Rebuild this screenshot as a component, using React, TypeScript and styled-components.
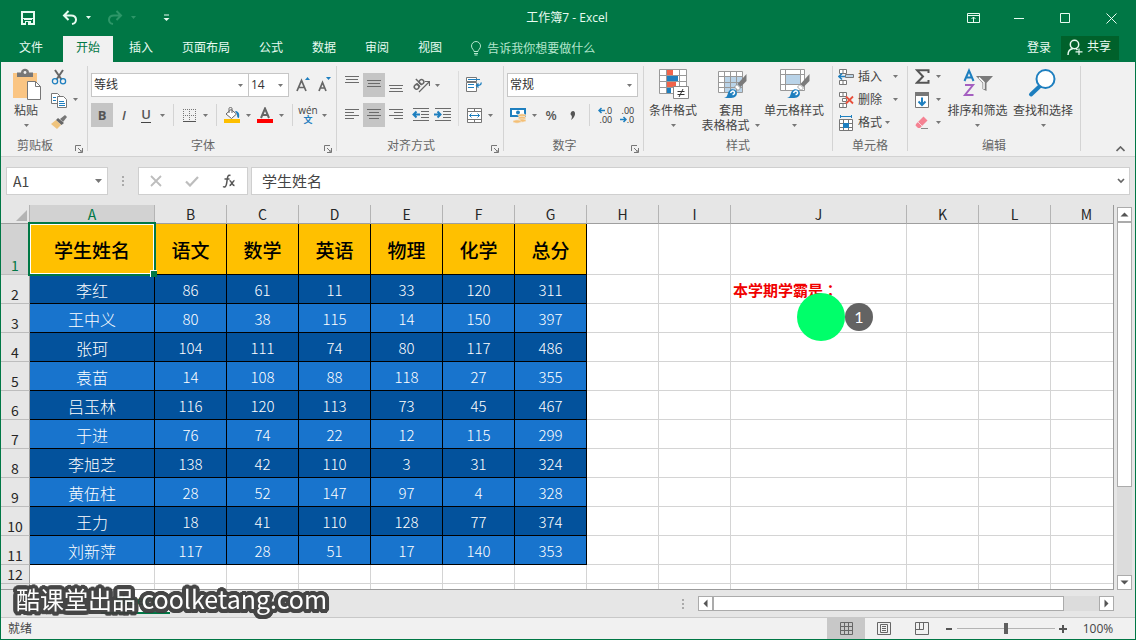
import React from "react";
import styled, { createGlobalStyle, css } from "styled-components";

const GREEN = "#007745";
const GREY = "#6b6b6b";
const BLUE = "#1e7fbf";
const UI = `"Open Sans", "Noto Sans CJK SC", sans-serif`;
const CELL = `"Noto Sans CJK SC", sans-serif`;

const Global = createGlobalStyle`
  * { box-sizing: border-box; }
  body { margin: 0; font: 12px/16px ${UI}; color: #444; }
  button, input, select { font: inherit; color: inherit; margin: 0; padding: 0; border: 0; background: none; border-radius: 0; outline: 0; }
  svg { display: block; flex: none; }
`;

const Window = styled.div`
  height: 100vh;
  min-height: 480px;
  display: flex;
  flex-direction: column;
  overflow: hidden;
  background: #e6e6e6;
`;

/* ---------- title bar and tabs ---------- */
const Header = styled.header`
  background: ${GREEN};
  color: #e8fbf1;
`;
const TitleBar = styled.div`
  display: grid;
  grid-template-columns: 1fr auto 1fr;
  align-items: center;
  height: 36px;
  padding: 0 2px 0 0;
`;
const Quick = styled.div`
  display: flex;
  align-items: center;
  gap: 16px;
  padding-left: 11px;
`;
const WindowButtons = styled.div`
  display: flex;
  justify-content: flex-end;
  align-items: center;
`;
const BarButton = styled.button<{ $w: number }>`
  display: flex;
  justify-content: center;
  align-items: center;
  width: ${(p) => p.$w}px;
  height: 32px;
`;
const Tabs = styled.nav`
  display: flex;
  height: 26px;
  padding-left: 6px;
  gap: 3px;
`;
const Tab = styled.button<{ $active?: boolean }>`
  padding: 0 13px 3px;
  white-space: nowrap;
  ${(p) => p.$active && css`
    background: #f1f1f1;
    color: ${GREEN};
    margin-left: 4px;
  `}
`;
const SignIn = styled(Tab)`
  padding: 0 7px 3px;
`;
const TellMe = styled.button`
  display: flex;
  align-items: center;
  gap: 5px;
  padding: 0 12px 1px;
  color: #b4e6cd;
`;
const Push = styled.div`
  flex: 1;
`;
const Share = styled.button`
  display: flex;
  align-items: center;
  gap: 4px;
  height: 24px;
  padding: 0 8px 2px 6px;
  margin-right: 17px;
  background: #00612b;
`;

/* ---------- ribbon ---------- */
const Body = styled.div`
  flex: 1;
  min-height: 0;
  display: flex;
  flex-direction: column;
  border: solid ${GREEN};
  border-width: 0 1px 1px;
`;
const Ribbon = styled.div`
  flex: none;
  display: flex;
  height: 95px;
  background: #f1f1f1;
  border-bottom: 1px solid #d2d2d2;
`;
const Group = styled.section<{ $w: number }>`
  width: ${(p) => p.$w}px;
  flex: none;
  display: flex;
  flex-direction: column;
  padding-top: 3px;
`;
const GroupBody = styled.div<{ $pad?: number }>`
  display: flex;
  height: 69px;
  padding-left: ${(p) => p.$pad ?? 0}px;
`;
const GroupLabel = styled.div`
  display: flex;
  align-items: center;
  height: 22px;
  padding-top: 2px;
  text-align: center;
  color: #666;
  span { flex: 1; }
`;
const LaunchButton = styled.button`
  width: 18px;
  padding: 5px 0 0 6px;
`;
const Divider = styled.div`
  flex: none;
  width: 1px;
  margin: 4px 0 5px;
  background: #d4d4d4;
`;
const Stack = styled.div<{ $top?: number; $grow?: boolean }>`
  display: flex;
  flex-direction: column;
  flex: ${(p) => (p.$grow ? 1 : "none")};
  padding-top: ${(p) => p.$top ?? 0}px;
`;
const Row = styled.div<{ $h?: number }>`
  display: flex;
  align-items: center;
  height: ${(p) => p.$h ?? 30}px;
`;
const Tool = styled.button<{ $on?: boolean }>`
  display: flex;
  align-items: center;
  justify-content: center;
  width: 22px;
  height: 24px;
  font-size: 14px;
  background: ${(p) => (p.$on ? "#c5c5c5" : "none")};
`;
const CaretTool = styled.button`
  display: flex;
  align-items: center;
  justify-content: center;
  width: 11px;
  height: 22px;
`;
const RowDivider = styled.div`
  width: 1px;
  height: 22px;
  margin: 0 4px 0 5px;
  background: #d4d4d4;
`;
const RowGap = styled.div`
  width: 3px;
`;
const TallDivider = styled.div`
  width: 1px;
  margin: 6px 4px 8px;
  background: #dcdcdc;
`;
const TextTool = styled.button`
  display: flex;
  align-items: center;
  gap: 4px;
  padding-left: 5px;
`;
const Big = styled.button<{ $w: number }>`
  width: ${(p) => p.$w}px;
  display: flex;
  flex-direction: column;
  align-items: center;
  padding-top: 3px;
  line-height: 15px;
  white-space: nowrap;
  > svg:first-child { margin-bottom: 3px; }
`;
const BigCaret = styled.span`
  display: flex;
  align-items: center;
  height: 14px;
`;
const WithCaret = styled.span`
  display: flex;
  align-items: center;
  gap: 4px;
`;
const SelectBox = styled.label<{ $w: number; $join?: boolean }>`
  position: relative;
  display: flex;
  align-items: center;
  width: ${(p) => p.$w}px;
  height: 24px;
  margin-left: ${(p) => (p.$join ? -1 : 0)}px;
  background: #fff;
  border: 1px solid #c6c6c6;
  color: #333;
  select { width: 100%; height: 100%; padding-left: 2px; appearance: none; }
  svg { position: absolute; right: 4px; pointer-events: none; }
`;
const Collapse = styled.button`
  align-self: flex-end;
  margin-left: auto;
  padding: 4px 10px;
`;

/* ---------- formula bar ---------- */
const FormulaBar = styled.div`
  flex: none;
  display: flex;
  height: 48px;
  padding: 10px 5px 10px;
`;
const Box = styled.div`
  display: flex;
  align-items: center;
  height: 28px;
  background: #fff;
  border: 1px solid #cfcfcf;
  font: 14px/20px ${CELL};
  input { min-width: 0; flex: 1; }
`;
const NameBox = styled(Box)`
  width: 102px;
  padding: 0 4px 0 6px;
`;
const FxBox = styled(Box)`
  width: 110px;
  justify-content: space-around;
  margin-right: 3px;
`;
const FormulaInput = styled(Box)`
  flex: 1;
  padding: 0 4px 0 10px;
  font-size: 15px;
`;
const Dots = styled.div`
  display: flex;
  align-items: center;
  justify-content: center;
  width: 30px;
`;

/* ---------- grid ---------- */
const SheetArea = styled.div`
  flex: 1;
  min-height: 0;
  display: flex;
`;
const GridFrame = styled.div`
  flex: 1;
  min-width: 0;
  overflow: hidden;
  background: linear-gradient(#e6e6e6 19px, #fff 19px);
  border-right: 1px solid #9a9a9a;
  border-bottom: 1px solid #9a9a9a;
`;
const Grid = styled.table`
  width: 1121px;
  table-layout: fixed;
  border-collapse: separate;
  border-spacing: 0;
  font-family: ${CELL};
  td, th { padding: 0; overflow: visible; }
`;
const ColHead = styled.th<{ $on?: boolean }>`
  height: 19px;
  font-size: 14px;
  line-height: 18px;
  font-weight: 400;
  vertical-align: bottom;
  color: ${(p) => (p.$on ? GREEN : "#262626")};
  background: ${(p) => (p.$on ? "#d2d2d2" : "#e6e6e6")};
  border-right: 1px solid #b4b4b4;
  border-bottom: 1px solid #9f9f9f;
`;
const Corner = styled(ColHead)`
  && { padding: 0 0 2px 15px; }
`;
const RowHead = styled.th<{ $on?: boolean }>`
  font-size: 14px;
  line-height: 18px;
  font-weight: 400;
  vertical-align: bottom;
  text-align: center;
  color: ${(p) => (p.$on ? GREEN : "#262626")};
  background: ${(p) => (p.$on ? "#d2d2d2" : "#e6e6e6")};
  border-right: 1px solid #9f9f9f;
  border-bottom: 1px solid #bdbdbd;
`;
const GridRow = styled.tr<{ $h: number }>`
  height: ${(p) => p.$h}px;
`;
const Cell = styled.td`
  border-right: 1px solid #d4d4d4;
  border-bottom: 1px solid #d4d4d4;
  position: relative;
`;
const TitleCell = styled(Cell)`
  && { padding-top: 2px; }
  background: #ffc000;
  border-color: #000;
  color: #000;
  font-size: 19px;
  line-height: 24px;
  font-weight: 500;
  text-align: center;
`;
const DataCell = styled(Cell)<{ $dark: boolean; $name?: boolean }>`
  && { padding-top: 2px; }
  background: ${(p) => (p.$dark ? "#03529c" : "#1874cd")};
  border-color: #000;
  color: #fff;
  font-size: ${(p) => (p.$name ? 16 : 15)}px;
  line-height: 20px;
  font-weight: 300;
  text-align: center;
`;
const NoteCell = styled(Cell)`
  && { padding: 2px 0 0 2px; }
  color: #f00000;
  font: 700 15px/20px "Noto Sans CJK TC", sans-serif;
  white-space: nowrap;
`;
const Selection = styled.div`
  position: absolute;
  inset: -2px;
  border: 2px solid ${GREEN};
  box-shadow: inset 0 0 0 1px #fff;
  z-index: 1;
  &::after {
    content: "";
    position: absolute;
    right: -3px;
    bottom: -3px;
    width: 6px;
    height: 6px;
    background: ${GREEN};
    border: solid #fff;
    border-width: 1px 0 0 1px;
  }
`;
const ClickMark = styled.div`
  position: absolute;
  left: 66px;
  top: -11px;
  width: 48px;
  height: 48px;
  border-radius: 50%;
  background: #00ff6a;
  z-index: 2;
`;
const ClickCount = styled.div`
  position: absolute;
  left: 114px;
  top: -1px;
  width: 28px;
  height: 28px;
  border-radius: 50%;
  background: #636363;
  color: #fff;
  font: 16px/28px Lato, sans-serif;
  text-align: center;
  z-index: 2;
`;
const VScroll = styled.div`
  width: 21px;
  display: flex;
  flex-direction: column;
  align-items: flex-start;
  padding: 2px 0 0 3px;
`;
const ScrollButton = styled.button`
  flex: none;
  display: flex;
  align-items: center;
  justify-content: center;
  width: 15px;
  height: 15px;
  background: #fff;
  border: 1px solid #ababab;
`;
const VTrack = styled.div`
  flex: 1;
  width: 15px;
  background: #dcdcdc;
`;
const VThumb = styled.div`
  height: 75%;
  background: #fff;
  border: 1px solid #ababab;
`;

/* ---------- bottom bars ---------- */
const SheetTabs = styled.div`
  flex: none;
  display: flex;
  align-items: center;
  height: 27px;
  padding: 0 21px 0 100px;
`;
const SheetTab = styled.button`
  align-self: flex-start;
  width: 69px;
  height: 24px;
  background: #fff;
  border-bottom: 2px solid ${GREEN};
  color: ${GREEN};
  font-weight: 700;
`;
const HScroll = styled.div`
  display: flex;
  width: 416px;
`;
const HTrack = styled.div`
  flex: 1;
  height: 15px;
  background: #dcdcdc;
`;
const HThumb = styled.div`
  width: 91%;
  height: 15px;
  background: #fff;
  border: 1px solid #ababab;
`;
const Status = styled.footer`
  flex: none;
  display: flex;
  align-items: center;
  height: 22px;
  padding-left: 7px;
  background: #f1f1f1;
  border-top: 1px solid #c8c8c8;
`;
const ViewButton = styled.button<{ $on?: boolean }>`
  display: flex;
  align-items: center;
  justify-content: center;
  width: 38px;
  height: 21px;
  background: ${(p) => (p.$on ? "#c8c8c8" : "none")};
`;
const ZoomButton = styled.button`
  display: flex;
  align-items: center;
  justify-content: center;
  width: 16px;
  height: 21px;
`;
const ZoomRange = styled.input`
  appearance: none;
  width: 98px;
  height: 12px;
  background: linear-gradient(#b4b4b4, #b4b4b4) center / 100% 1px no-repeat;
  &::-webkit-slider-thumb {
    appearance: none;
    width: 4px;
    height: 11px;
    background: #5f5f5f;
  }
`;
const ZoomValue = styled.button`
  width: 64px;
  padding-right: 10px;
  font-size: 12px;
`;
const halo = Array.from({ length: 24 }, (_, i) => {
  const a = (i * Math.PI) / 12;
  return `${Math.round(Math.cos(a) * 40) / 10}px ${Math.round(Math.sin(a) * 40) / 10}px 0 #3e3e3e`;
}).concat("2px 0 0 #3e3e3e", "-2px 0 0 #3e3e3e", "0 2px 0 #3e3e3e", "0 -2px 0 #3e3e3e").join(",");
const Watermark = styled.div`
  position: fixed;
  left: 16px;
  bottom: 26px;
  font: 24px/30px ${CELL};
  color: #fff;
  opacity: 0.95;
  white-space: nowrap;
  text-shadow: ${halo};
  pointer-events: none;
  z-index: 5;
  span { font-size: 25px; }
`;

/* ---------- icons ---------- */
const Caret = ({ c = "#777" }: { c?: string }) => (
  <svg width="7" height="7" viewBox="0 0 7 7">
    <path d="M1 2h5L3.500 5z" fill={c} />
  </svg>
);
const ScrollArrow = ({ dir }: { dir: number }) => (
  <svg width="9" height="9" viewBox="0 0 9 9">
    <path d="M.5 2.500h8L4.500 6.500z" fill="#555" transform={`rotate(${dir} 4.500 4.500)`} />
  </svg>
);
const Launcher = () => (
  <LaunchButton aria-label="更多选项">
    <svg width="8" height="8" viewBox="0 0 8 8" fill="none" stroke="#777">
      <path d="M.5 6V.5H6M3 3l3 3M7.500 3v4.500H3M7 5v2H5" />
    </svg>
  </LaunchButton>
);
const lines = (ys: number[][]) => (
  <svg width="16" height="18" viewBox="0 0 16 18" stroke={GREY} shapeRendering="crispEdges">
    {ys.map(([y, a, b]) => <path key={y} d={`M${a} ${y}.5H${b}`} />)}
  </svg>
);
const Indent = ({ right }: { right?: boolean }) => (
  <svg width="18" height="16" viewBox="0 0 18 16" fill="none">
    <path d="M1 1.500h16M9 4.500h8M9 7.500h8M9 10.500h8M1 13.500h16" stroke={GREY} shapeRendering="crispEdges" />
    <path d={right ? "M0 7.500h6M3.500 4.500l3 3-3 3" : "M8 7.500H2M4.500 4.500l-3 3 3 3"} stroke={BLUE} strokeWidth="2" />
  </svg>
);
const Brush = () => (
  <g>
    <path d="M31.500 6l-9 10 3 3L31.500 13z" fill="#7b7b7b" />
    <path d="M22 16.500l3.500 3.500-2.500 2.500-3.500-3.500z" fill="#fff" stroke="#888" strokeWidth=".8" />
    <path d="M9 30c4-1 3-4 5-7 2-2.500 6-2 7.500.5 1.500 3-1 6.500-5.500 6.500z" fill={BLUE} />
    <path d="M15.500 25c1-2.500 3.500-2.500 4-.5s-2 2-2 2" stroke="#fff" strokeWidth="1.500" fill="none" />
  </g>
);

const grades: [string, number[]][] = [
  ["李红", [86, 61, 11, 33, 120, 311]],
  ["王中义", [80, 38, 115, 14, 150, 397]],
  ["张珂", [104, 111, 74, 80, 117, 486]],
  ["袁苗", [14, 108, 88, 118, 27, 355]],
  ["吕玉林", [116, 120, 113, 73, 45, 467]],
  ["于进", [76, 74, 22, 12, 115, 299]],
  ["李旭芝", [138, 42, 110, 3, 31, 324]],
  ["黄伍柱", [28, 52, 147, 97, 4, 328]],
  ["王力", [18, 41, 110, 128, 77, 374]],
  ["刘新萍", [117, 28, 51, 17, 140, 353]],
];
const columns: [string, number][] = [
  ["A", 125], ["B", 72], ["C", 72], ["D", 72], ["E", 72], ["F", 72], ["G", 72],
  ["H", 72], ["I", 72], ["J", 176], ["K", 72], ["L", 72], ["M", 72],
];
const blanks = ["H", "I", "J", "K", "L", "M"];

const TopBar = () => (
  <Header>
    <TitleBar>
      <Quick>
        <BarButton $w={34} aria-label="保存">
          <svg width="14" height="14" viewBox="0 0 14 14" fill="none" stroke="#e8fbf1" shapeRendering="crispEdges">
            <path d="M1 1h12v12H1z" strokeWidth="2" /><path d="M2 7.500h10M3 8.500h8" /><path d="M4 10h6v4H4z" fill="#e8fbf1" stroke="none" /><path d="M5 11h2v3H5z" fill={GREEN} stroke="none" />
          </svg>
        </BarButton>
        <BarButton $w={30} aria-label="撤消">
          <svg width="30" height="16" viewBox="0 0 30 16" fill="none" stroke="#e8fbf1" strokeWidth="2">
            <path d="M7.500 1L3 5.500 7.500 10M3 5.500h7c6.500 0 6.500 7.500 1 8.500" /><path d="M25 6h5l-2.500 3z" fill="#e8fbf1" stroke="none" />
          </svg>
        </BarButton>
        <BarButton $w={30} aria-label="恢复">
          <svg width="30" height="16" viewBox="0 0 30 16" fill="none" stroke="#2d9668" strokeWidth="2">
            <path d="M9.500 1L14 5.500 9.500 10M14 5.500H7c-6.500 0-6.500 7.500-1 8.500" /><path d="M24 6h5l-2.500 3z" fill="#2d9668" stroke="none" />
          </svg>
        </BarButton>
        <BarButton $w={26} aria-label="自定义快速访问工具栏">
          <svg width="7" height="8" viewBox="0 0 7 8"><path d="M1 1h5" stroke="#e8fbf1" /><path d="M.5 4h6l-3 3z" fill="#e8fbf1" /></svg>
        </BarButton>
      </Quick>
      <span>工作簿7 - Excel</span>
      <WindowButtons>
        <BarButton $w={46} aria-label="功能区显示选项">
          <svg width="13" height="10" viewBox="0 0 13 10" fill="none" stroke="#e8fbf1"><path d="M.5.5h12v9H.5zM.5 2.500h12M6.500 9V4M4.500 6l2-2 2 2" /></svg>
        </BarButton>
        <BarButton $w={46} aria-label="最小化">
          <svg width="10" height="10" viewBox="0 0 10 10" stroke="#e8fbf1"><path d="M0 5.500h10" /></svg>
        </BarButton>
        <BarButton $w={46} aria-label="最大化">
          <svg width="10" height="10" viewBox="0 0 10 10" fill="none" stroke="#e8fbf1"><path d="M.5.5h9v9h-9z" /></svg>
        </BarButton>
        <BarButton $w={46} aria-label="关闭">
          <svg width="11" height="11" viewBox="0 0 11 11" stroke="#e8fbf1"><path d="M.5.5l10 10M10.500.5l-10 10" /></svg>
        </BarButton>
      </WindowButtons>
    </TitleBar>
    <Tabs>
      <Tab>文件</Tab>
      <Tab $active>开始</Tab>
      {["插入", "页面布局", "公式", "数据", "审阅", "视图"].map((t) => <Tab key={t}>{t}</Tab>)}
      <TellMe>
        <svg width="12" height="15" viewBox="0 0 12 15" fill="none" stroke="#b4e6cd">
          <path d="M4 10.500C4 8.500 1.500 8 1.500 5a4.500 4.500 0 0 1 9 0c0 3-2.500 3.500-2.500 5.500zM4 12.500h4M4.500 14h3" />
        </svg>
        告诉我你想要做什么
      </TellMe>
      <Push />
      <SignIn>登录</SignIn>
      <Share>
        <svg width="16" height="17" viewBox="0 0 16 17" fill="none" stroke="#e8fbf1" strokeWidth="1.500">
          <circle cx="7.500" cy="5.500" r="4.200" /><path d="M1 16c0-4 2-6 5-6.500M9 9.500l1.500 1.500" /><path d="M12 9.500v6.500M8.500 12.800h7" strokeWidth="1.200" />
        </svg>
        共享
      </Share>
    </Tabs>
  </Header>
);

const ClipboardGroup = () => (
  <Group $w={86}>
    <GroupBody $pad={3}>
      <Big $w={44}>
        <svg width="30" height="32" viewBox="0 0 30 32">
          <path d="M2 5h24v25H2z" fill="#fac583" />
          <path d="M6 4.500h4c0-5 8-5 8 0h4V9H6z" fill="#777" /><circle cx="14" cy="4.500" r="1.400" fill="#f1f1f1" />
          <path d="M16.500 13.500h8l5 5v13h-13z" fill="#fff" stroke="#777" /><path d="M24.500 13.500v5h5" fill="none" stroke="#777" />
        </svg>
        粘贴
        <BigCaret><Caret /></BigCaret>
      </Big>
      <Stack>
        <Row $h={23}>
          <Tool aria-label="剪切">
            <svg width="16" height="16" viewBox="0 0 16 16" fill="none">
              <path d="M4 1l6.500 9.500M12 1L5.500 10.500" stroke="#666" strokeWidth="2" />
              <circle cx="4" cy="12.200" r="2.600" stroke={BLUE} strokeWidth="1.300" /><circle cx="12" cy="12.200" r="2.600" stroke={BLUE} strokeWidth="1.300" />
            </svg>
          </Tool>
        </Row>
        <Row $h={23}>
          <Tool aria-label="复制">
            <svg width="16" height="16" viewBox="0 0 16 16" fill="#fff" stroke="#777">
              <path d="M.5 1.500h6l2 2v8h-8z" /><path d="M2 5.500h3M2 8.500h3" stroke={BLUE} />
              <path d="M6.500 4.500h6l3 3v8h-9z" /><path d="M8 9.500h5M8 11.500h6M8 13.500h6" stroke={BLUE} />
            </svg>
          </Tool>
          <CaretTool aria-label="复制选项"><Caret /></CaretTool>
        </Row>
        <Row $h={23}>
          <Tool aria-label="格式刷">
            <svg width="16" height="15" viewBox="0 0 16 15">
              <path d="M0 9l5-4 5 5-4 4z" fill="#efc47e" /><path d="M5 5l2-2 6 5-2.500 2z" fill="#666" /><path d="M9 4l5-4 2 2-4 5z" fill="#777" />
            </svg>
          </Tool>
        </Row>
      </Stack>
    </GroupBody>
    <GroupLabel><span>剪贴板</span><Launcher /></GroupLabel>
  </Group>
);

const Glyph = styled.span<{ $italic?: boolean; $under?: boolean; $bold?: boolean }>`
  font-size: 13px;
  line-height: 15px;
  font-weight: ${(p) => (p.$bold ? 700 : 600)};
  font-style: ${(p) => (p.$italic ? "italic" : "normal")};
  border-bottom: ${(p) => (p.$under ? "1px solid #444" : "0")};
  color: #555;
`;
const Wen = styled.span`
  display: flex;
  flex-direction: column;
  align-items: center;
  font-size: 10px;
  line-height: 9px;
  b { color: ${BLUE}; font-size: 9px; }
`;

const FontGroup = () => (
  <Group $w={248}>
    <GroupBody $pad={3}>
      <Stack $top={5}>
        <Row>
          <SelectBox $w={158}><select aria-label="字体"><option>等线</option></select><Caret /></SelectBox>
          <SelectBox $w={41} $join><select aria-label="字号"><option>14</option></select><Caret /></SelectBox>
          <RowGap />
          <Tool aria-label="增大字号">
            <svg width="16" height="18" viewBox="0 0 16 18"><path d="M2 15L6.500 4.500 11 15M3.500 11.500h6" fill="none" stroke="#666" strokeWidth="1.700" /><path d="M10 4h5L12.500 1z" fill={BLUE} /></svg>
          </Tool>
          <Tool aria-label="减小字号">
            <svg width="16" height="18" viewBox="0 0 16 18"><path d="M2 15L5.500 6.500 9 15M3 12h5" fill="none" stroke="#666" strokeWidth="1.700" /><path d="M9 1h5l-2.500 3z" fill={BLUE} /></svg>
          </Tool>
        </Row>
        <Row>
          <Tool $on aria-label="加粗"><Glyph $bold>B</Glyph></Tool>
          <Tool aria-label="倾斜"><Glyph as="i" $italic>I</Glyph></Tool>
          <Tool aria-label="下划线"><Glyph $under>U</Glyph></Tool>
          <CaretTool aria-label="下划线选项"><Caret /></CaretTool>
          <RowDivider />
          <Tool aria-label="边框">
            <svg width="13" height="13" viewBox="0 0 13 13" stroke="#777" strokeDasharray="1 1" fill="none" shapeRendering="crispEdges">
              <path d="M0 .5h13M0 6.500h13M.5 0v13M6.500 0v13M12.500 0v13" /><path d="M0 12.500h13" stroke="#555" strokeDasharray="none" />
            </svg>
          </Tool>
          <CaretTool aria-label="边框选项"><Caret /></CaretTool>
          <RowDivider />
          <Tool aria-label="填充颜色">
            <svg width="16" height="16" viewBox="0 0 16 16" fill="none">
              <path d="M2 7l5-4.500 5.500 4.500-5 4.500z" fill="#fff" stroke="#666" /><path d="M5 6V1.500c0-1.500 3-1.500 3 0V6" stroke="#666" />
              <path d="M11 4c3 0 5 2 4 7-1.500 0-2-1-2-4z" fill={BLUE} /><path d="M0 12h16v4H0z" fill="#fdbf00" />
            </svg>
          </Tool>
          <CaretTool aria-label="填充颜色选项"><Caret /></CaretTool>
          <Tool aria-label="字体颜色">
            <svg width="16" height="16" viewBox="0 0 16 16"><path d="M4 11L8 1.500 12 11M5.500 8h5" fill="none" stroke="#666" strokeWidth="2" /><path d="M0 12h16v4H0z" fill="#f00" /></svg>
          </Tool>
          <CaretTool aria-label="字体颜色选项"><Caret /></CaretTool>
          <RowDivider />
          <Tool aria-label="拼音"><Wen>wén<b>文</b></Wen></Tool>
          <CaretTool aria-label="拼音选项"><Caret /></CaretTool>
        </Row>
      </Stack>
    </GroupBody>
    <GroupLabel><span>字体</span><Launcher /></GroupLabel>
  </Group>
);

const AlignGroup = () => (
  <Group $w={166}>
    <GroupBody $pad={4}>
      <Stack $top={5}>
        <Row>
          <Tool aria-label="顶端对齐">{lines([[0, 1, 15], [3, 2, 14], [6, 1, 15]])}</Tool>
          <Tool $on aria-label="垂直居中">{lines([[4, 1, 15], [7, 2, 14], [10, 1, 15]])}</Tool>
          <Tool aria-label="底端对齐">{lines([[9, 1, 15], [12, 2, 14], [15, 1, 15]])}</Tool>
          <RowGap />
          <Tool aria-label="方向">
            <svg width="18" height="16" viewBox="0 0 18 16" fill="none" stroke="#666" strokeWidth="1.500">
              <path d="M7 15L17 5M13 4.500H17.500V9" strokeWidth="1.200" />
              <g transform="rotate(-45 6 7)"><circle cx="3" cy="8" r="2.300" /><path d="M5.500 5.500v5M8 2v8.500" /><circle cx="10" cy="8" r="2.300" /></g>
            </svg>
          </Tool>
          <CaretTool aria-label="方向选项"><Caret /></CaretTool>
        </Row>
        <Row>
          <Tool aria-label="左对齐">{lines([[3, 1, 15], [6, 1, 10], [9, 1, 15], [12, 1, 10]])}</Tool>
          <Tool $on aria-label="居中">{lines([[3, 1, 15], [6, 3, 13], [9, 1, 15], [12, 3, 13]])}</Tool>
          <Tool aria-label="右对齐">{lines([[3, 1, 15], [6, 6, 15], [9, 1, 15], [12, 6, 15]])}</Tool>
          <RowGap />
          <Tool aria-label="减少缩进量"><Indent /></Tool>
          <Tool aria-label="增加缩进量"><Indent right /></Tool>
        </Row>
      </Stack>
      <TallDivider />
      <Stack $top={5}>
        <Row>
          <Tool aria-label="自动换行">
            <svg width="16" height="16" viewBox="0 0 16 16" fill="none" stroke="#777">
              <path d="M.5.5h10v4H.5zM.5 5.500h10v9H.5z" fill="#fff" /><path d="M2 2.500h12M2 7.500h6M2 10.500h6" stroke={BLUE} /><path d="M15 5.500c.5 2-1 3-4.500 3M12.500 6.500l-2 2 2 2" stroke={BLUE} strokeWidth="1.300" />
            </svg>
          </Tool>
        </Row>
        <Row>
          <Tool aria-label="合并后居中">
            <svg width="15" height="15" viewBox="0 0 15 15" fill="#fff" stroke="#777">
              <path d="M.5.5h14v14H.5zM.5 3.500h14M.5 11.500h14M7.500.5v3M7.500 11.500v3" /><path d="M2.500 7.500h10M4.500 5.500l-2 2 2 2M10.500 5.500l2 2-2 2" stroke={BLUE} fill="none" />
            </svg>
          </Tool>
          <CaretTool aria-label="合并选项"><Caret /></CaretTool>
        </Row>
      </Stack>
    </GroupBody>
    <GroupLabel><span>对齐方式</span><Launcher /></GroupLabel>
  </Group>
);
const Decimals = styled.span`
  font-size: 9px;
  line-height: 9px;
  color: #333;
  white-space: nowrap;
  div { display: flex; align-items: center; justify-content: flex-end; }
`;
const Arrow = ({ back }: { back?: boolean }) => (
  <svg width="7" height="7" viewBox="0 0 7 7" fill="none" stroke={BLUE} strokeWidth="1.500">
    <path d={back ? "M7 3.500H1M3.500 1L1 3.500 3.500 6" : "M0 3.500h6M3.500 1L6 3.500 3.500 6"} />
  </svg>
);

const NumberGroup = () => (
  <Group $w={139}>
    <GroupBody $pad={3}>
      <Stack $top={5}>
        <Row><SelectBox $w={131}><select aria-label="数字格式"><option>常规</option></select><Caret /></SelectBox></Row>
        <Row>
          <Tool aria-label="会计数字格式">
            <svg width="17" height="17" viewBox="0 0 17 17">
              <path d="M1 2h14v7H1z" fill="#fff" stroke={BLUE} strokeWidth="2" /><circle cx="8" cy="5.500" r="2" fill={BLUE} />
              <g fill="#f4bf75" stroke="#f1f1f1" strokeWidth=".6"><ellipse cx="12" cy="8.500" rx="4" ry="1.700" /><ellipse cx="12" cy="11" rx="4" ry="1.700" /><ellipse cx="12" cy="13.500" rx="4" ry="1.700" /><ellipse cx="7" cy="14.500" rx="4" ry="1.700" /></g>
            </svg>
          </Tool>
          <CaretTool aria-label="会计格式选项"><Caret /></CaretTool>
          <Tool aria-label="百分比样式"><Glyph>%</Glyph></Tool>
          <Tool aria-label="千位分隔样式"><svg width="6" height="9" viewBox="0 0 6 9"><path d="M3 0c3 0 3 6-2 9 1.500-3 1-4 0-5S1 0 3 0z" fill="#555" /></svg></Tool>
          <RowDivider />
          <Tool aria-label="增加小数位数"><Decimals><div><Arrow back />.0</div><div>.00</div></Decimals></Tool>
          <Tool aria-label="减少小数位数"><Decimals><div>.00</div><div><Arrow />.0</div></Decimals></Tool>
        </Row>
      </Stack>
    </GroupBody>
    <GroupLabel><span>数字</span><Launcher /></GroupLabel>
  </Group>
);

const StylesGroup = () => (
  <Group $w={188}>
    <GroupBody>
      <Big $w={58}>
        <svg width="32" height="32" viewBox="0 0 32 32" fill="none">
          <path d="M2.500 1.500h27v24h-27z" fill="#fff" />
          <path d="M10 2h6v6h-6zM10 14h9v6h-9z" fill="#f0644b" /><path d="M10 8h11v6H10zM10 20h4v6h-4z" fill={BLUE} />
          <path d="M2.500 1.500h27v24h-27zM2.500 7.500h27M2.500 13.500h27M2.500 19.500h27M9.500 1.500v24M22.500 1.500v24" stroke="#999" />
          <path d="M16.500 18.500h15v12h-15z" fill="#fff" stroke="#888" /><path d="M20.500 23.500h7M20.500 26.500h7M26 21l-4 8" stroke="#333" />
        </svg>
        条件格式
        <BigCaret><Caret /></BigCaret>
      </Big>
      <Big $w={58}>
        <svg width="32" height="32" viewBox="0 0 32 32" fill="none">
          <path d="M3.500 3.500h24v21h-24z" fill="#fff" /><path d="M10 9h17v15H10z" fill="#b9d3e8" />
          <path d="M3.500 3.500h24v21h-24zM3.500 8.500h24M3.500 14.500h24M3.500 19.500h24M9.500 3.500v21M15.500 3.500v21M21.500 3.500v21" stroke="#999" />
          <Brush />
        </svg>
        套用
        <WithCaret>表格格式<Caret /></WithCaret>
      </Big>
      <Big $w={68}>
        <svg width="32" height="32" viewBox="0 0 32 32" fill="none">
          <path d="M2.500 1.500h24v21h-24z" fill="#fff" /><path d="M8 7h14v9H8z" fill="#b9d3e8" />
          <path d="M2.500 1.500h24v21h-24zM2.500 6.500h24M2.500 16.500h24M7.500 1.500v21M22.500 1.500v21" stroke="#999" />
          <Brush />
        </svg>
        单元格样式
        <BigCaret><Caret /></BigCaret>
      </Big>
    </GroupBody>
    <GroupLabel><span>样式</span></GroupLabel>
  </Group>
);

const CellsGroup = () => (
  <Group $w={74}>
    <GroupBody>
      <Stack $grow>
        <Row $h={23}>
          <TextTool>
            <svg width="16" height="16" viewBox="0 0 16 16" fill="#fff" stroke="#777">
              <path d="M1.500.5h7v4h-7zM1.500 11.500h7v4h-7zM5 .5v4M5 11.500v4" /><path d="M7.500 5.500h8v3h-8z" fill="#b9d3e8" /><path d="M7 7.500H1M4 4.500l-3 3 3 3" stroke={BLUE} strokeWidth="1.600" fill="none" />
            </svg>
            插入
          </TextTool>
          <Push /><CaretTool aria-label="插入选项"><Caret /></CaretTool><RowGap /><RowGap />
        </Row>
        <Row $h={23}>
          <TextTool>
            <svg width="16" height="16" viewBox="0 0 16 16" fill="#fff" stroke="#777">
              <path d="M1.500.5h7v4h-7zM1.500 11.500h7v4h-7zM5 .5v4M5 11.500v4M4.500 6.500h4v3h-4z" /><path d="M8 4.500l7 7M15 4.500l-7 7" stroke="#e8503c" strokeWidth="1.800" />
            </svg>
            删除
          </TextTool>
          <Push /><CaretTool aria-label="删除选项"><Caret /></CaretTool><RowGap /><RowGap />
        </Row>
        <Row $h={23}>
          <TextTool>
            <svg width="16" height="16" viewBox="0 0 16 16" fill="#fff" stroke="#777">
              <path d="M1.500 4.500h13v11h-13zM1.500 8.500h13M1.500 12.500h13M5.500 4.500v11M10.500 4.500v11" /><path d="M5 8h6v5H5z" fill={BLUE} stroke="none" /><path d="M2.500 1.500h11M2.500 0v3M13.500 0v3" stroke={BLUE} />
            </svg>
            格式
          </TextTool>
          <CaretTool aria-label="格式选项"><Caret /></CaretTool>
        </Row>
      </Stack>
    </GroupBody>
    <GroupLabel><span>单元格</span></GroupLabel>
  </Group>
);

const EditGroup = () => (
  <Group $w={172}>
    <GroupBody $pad={3}>
      <Stack>
        <Row $h={23}>
          <Tool aria-label="自动求和"><svg width="15" height="15" viewBox="0 0 15 15" fill="none" stroke="#555" strokeWidth="2"><path d="M13.500 4V1.200H2L8 7.500 2 13.700h11.500V11" /></svg></Tool>
          <CaretTool aria-label="求和选项"><Caret /></CaretTool>
        </Row>
        <Row $h={23}>
          <Tool aria-label="填充"><svg width="14" height="16" viewBox="0 0 14 16" fill="#fff" stroke="#777"><path d="M.5.5h13v15H.5z" /><path d="M.5.5h13v3H.5z" fill="#777" /><path d="M7 5.500v7M3.500 9.500L7 13l3.500-3.500" stroke={BLUE} strokeWidth="2" fill="none" /></svg></Tool>
          <CaretTool aria-label="填充选项"><Caret /></CaretTool>
        </Row>
        <Row $h={23}>
          <Tool aria-label="清除"><svg width="14" height="13" viewBox="0 0 14 13"><path d="M1 8l7.500-7.500 4 4L5 12H3L.5 9.500z" fill="#f58293" /><path d="M3 6l4 4" stroke="#f7d5da" /><path d="M6 12.500h7" stroke="#888" /></svg></Tool>
          <CaretTool aria-label="清除选项"><Caret /></CaretTool>
        </Row>
      </Stack>
      <Big $w={67}>
        <svg width="32" height="32" viewBox="0 0 32 32" fill="none">
          <path d="M2.500 13L7 2.500 11.500 13M4 9.500h6" stroke={BLUE} strokeWidth="2" />
          <path d="M3 17h8L3 27h8.500" stroke="#a45fc0" strokeWidth="2" />
          <path d="M14 8h17l-6.500 7v8l-4-2v-6z" fill="#7b7b7b" /><path d="M17 9.500l5 5v6.500" stroke="#fff" strokeWidth="1.500" />
        </svg>
        排序和筛选
        <BigCaret><Caret /></BigCaret>
      </Big>
      <Big $w={64}>
        <svg width="32" height="32" viewBox="0 0 32 32" fill="none">
          <path d="M13 18L4 26.500" stroke={BLUE} strokeWidth="4" strokeLinecap="round" /><circle cx="18.500" cy="11" r="9" stroke={BLUE} strokeWidth="2" fill="#fff" />
        </svg>
        查找和选择
        <BigCaret><Caret /></BigCaret>
      </Big>
    </GroupBody>
    <GroupLabel><span>编辑</span></GroupLabel>
  </Group>
);

const Sheet = () => (
  <SheetArea>
    <GridFrame>
      <Grid>
        <colgroup>
          <col width={29} />
          {columns.map(([n, w]) => <col key={n} width={w} />)}
        </colgroup>
        <thead>
          <tr>
            <Corner aria-label="全选"><svg width="11" height="11" viewBox="0 0 11 11"><path d="M11 0v11H0z" fill="#b4b4b4" /></svg></Corner>
            {columns.map(([n]) => <ColHead key={n} $on={n === "A"}>{n}</ColHead>)}
          </tr>
        </thead>
        <tbody>
          <GridRow $h={51}>
            <RowHead $on>1</RowHead>
            {["学生姓名", "语文", "数学", "英语", "物理", "化学", "总分"].map((t, i) => (
              <TitleCell key={t}>{t}{i === 0 && <Selection />}</TitleCell>
            ))}
            {blanks.map((b) => <Cell key={b} />)}
          </GridRow>
          {grades.map(([name, marks], r) => (
            <GridRow key={name} $h={29}>
              <RowHead>{r + 2}</RowHead>
              <DataCell $dark={r % 2 === 0} $name>{name}</DataCell>
              {marks.map((m, i) => <DataCell key={i} $dark={r % 2 === 0}>{m}</DataCell>)}
              {blanks.map((b) =>
                b === "J" && r === 0 ? <NoteCell key={b}>本学期学霸是：</NoteCell> :
                b === "J" && r === 1 ? <Cell key={b}><ClickMark /><ClickCount>1</ClickCount></Cell> :
                <Cell key={b} />
              )}
            </GridRow>
          ))}
          <GridRow $h={19}>
            <RowHead>12</RowHead>
            {columns.map(([n]) => <Cell key={n} />)}
          </GridRow>
          <GridRow $h={19}>
            <RowHead />
            {columns.map(([n]) => <Cell key={n} />)}
          </GridRow>
        </tbody>
      </Grid>
    </GridFrame>
    <VScroll>
      <ScrollButton aria-label="向上滚动"><ScrollArrow dir={180} /></ScrollButton>
      <VTrack><VThumb /></VTrack>
      <ScrollButton aria-label="向下滚动"><ScrollArrow dir={0} /></ScrollButton>
    </VScroll>
  </SheetArea>
);

const DotsIcon = () => (
  <svg width="2" height="10" viewBox="0 0 2 10" fill="#aaa"><path d="M0 0h2v2H0zM0 4h2v2H0zM0 8h2v2H0z" /></svg>
);

export default function App() {
  return (
    <Window>
      <Global />
      <TopBar />
      <Body>
        <Ribbon>
          <ClipboardGroup /><Divider />
          <FontGroup /><Divider />
          <AlignGroup /><Divider />
          <NumberGroup /><Divider />
          <StylesGroup /><Divider />
          <CellsGroup /><Divider />
          <EditGroup /><Divider />
          <Collapse aria-label="折叠功能区"><svg width="9" height="6" viewBox="0 0 9 6" fill="none" stroke="#666" strokeWidth="1.700"><path d="M.5 5l4-4 4 4" /></svg></Collapse>
        </Ribbon>
        <FormulaBar>
          <NameBox><input aria-label="名称框" defaultValue="A1" /><svg width="9" height="6" viewBox="0 0 9 6"><path d="M1 1h7L4.500 5z" fill="#777" /></svg></NameBox>
          <Dots><DotsIcon /></Dots>
          <FxBox>
            <button aria-label="取消"><svg width="12" height="12" viewBox="0 0 12 12" stroke="#bdbdbd" strokeWidth="1.800"><path d="M1 1l10 10M11 1L1 11" /></svg></button>
            <button aria-label="输入"><svg width="14" height="11" viewBox="0 0 14 11" fill="none" stroke="#bdbdbd" strokeWidth="2.200"><path d="M1 5.500l4 4L13 1" /></svg></button>
            <button aria-label="插入函数">
              <svg width="14" height="14" viewBox="0 0 14 14" fill="none" stroke="#555" strokeWidth="1.500"><path d="M8.500 1.500C5 0 5.500 5 4.500 10c-.5 3-2 3.500-3.500 2.500M2.500 5h5M7.500 6.500c2 0 2.500 5 5 5M12.500 6.500c-1.500 0-3 5-5 5" /></svg>
            </button>
          </FxBox>
          <FormulaInput><input aria-label="编辑栏" defaultValue="学生姓名" /><svg width="8" height="6" viewBox="0 0 8 6" fill="none" stroke="#666" strokeWidth="1.700"><path d="M1 1l3 3 3-3" /></svg></FormulaInput>
        </FormulaBar>
        <Sheet />
        <SheetTabs>
          <SheetTab>Sheet1</SheetTab>
          <Push />
          <Dots><DotsIcon /></Dots>
          <HScroll>
            <ScrollButton aria-label="向左滚动"><ScrollArrow dir={90} /></ScrollButton>
            <HTrack><HThumb /></HTrack>
            <ScrollButton aria-label="向右滚动"><ScrollArrow dir={270} /></ScrollButton>
          </HScroll>
        </SheetTabs>
        <Status>
          <span>就绪</span>
          <Push />
          <ViewButton $on aria-label="普通"><svg width="13" height="13" viewBox="0 0 13 13" fill="none" stroke="#666"><path d="M.5.5h12v12H.5zM.5 4.500h12M.5 8.500h12M4.500.5v12M8.500.5v12" /></svg></ViewButton>
          <ViewButton aria-label="页面布局"><svg width="14" height="13" viewBox="0 0 14 13" fill="none" stroke="#666"><path d="M.5.5h13v12H.5zM3.500 2.500h7v8h-7zM5 4.500h4M5 6.500h4M5 8.500h4" /></svg></ViewButton>
          <ViewButton aria-label="分页预览"><svg width="14" height="13" viewBox="0 0 14 13" fill="none" stroke="#666"><path d="M.5.5h13v12H.5zM.5 7.500h8M4.500.5v7M8.500.5v7" /></svg></ViewButton>
          <ZoomButton aria-label="缩小"><svg width="6" height="2" viewBox="0 0 6 2"><path d="M0 0h6v2H0z" fill="#555" /></svg></ZoomButton>
          <ZoomRange type="range" aria-label="缩放" min={10} max={190} defaultValue={100} />
          <ZoomButton aria-label="放大"><svg width="8" height="8" viewBox="0 0 8 8"><path d="M0 3h8v2H0zM3 0h2v8H3z" fill="#555" /></svg></ZoomButton>
          <ZoomValue>100%</ZoomValue>
        </Status>
      </Body>
      <Watermark>酷课堂出品 <span>coolketang.com</span></Watermark>
    </Window>
  );
}
